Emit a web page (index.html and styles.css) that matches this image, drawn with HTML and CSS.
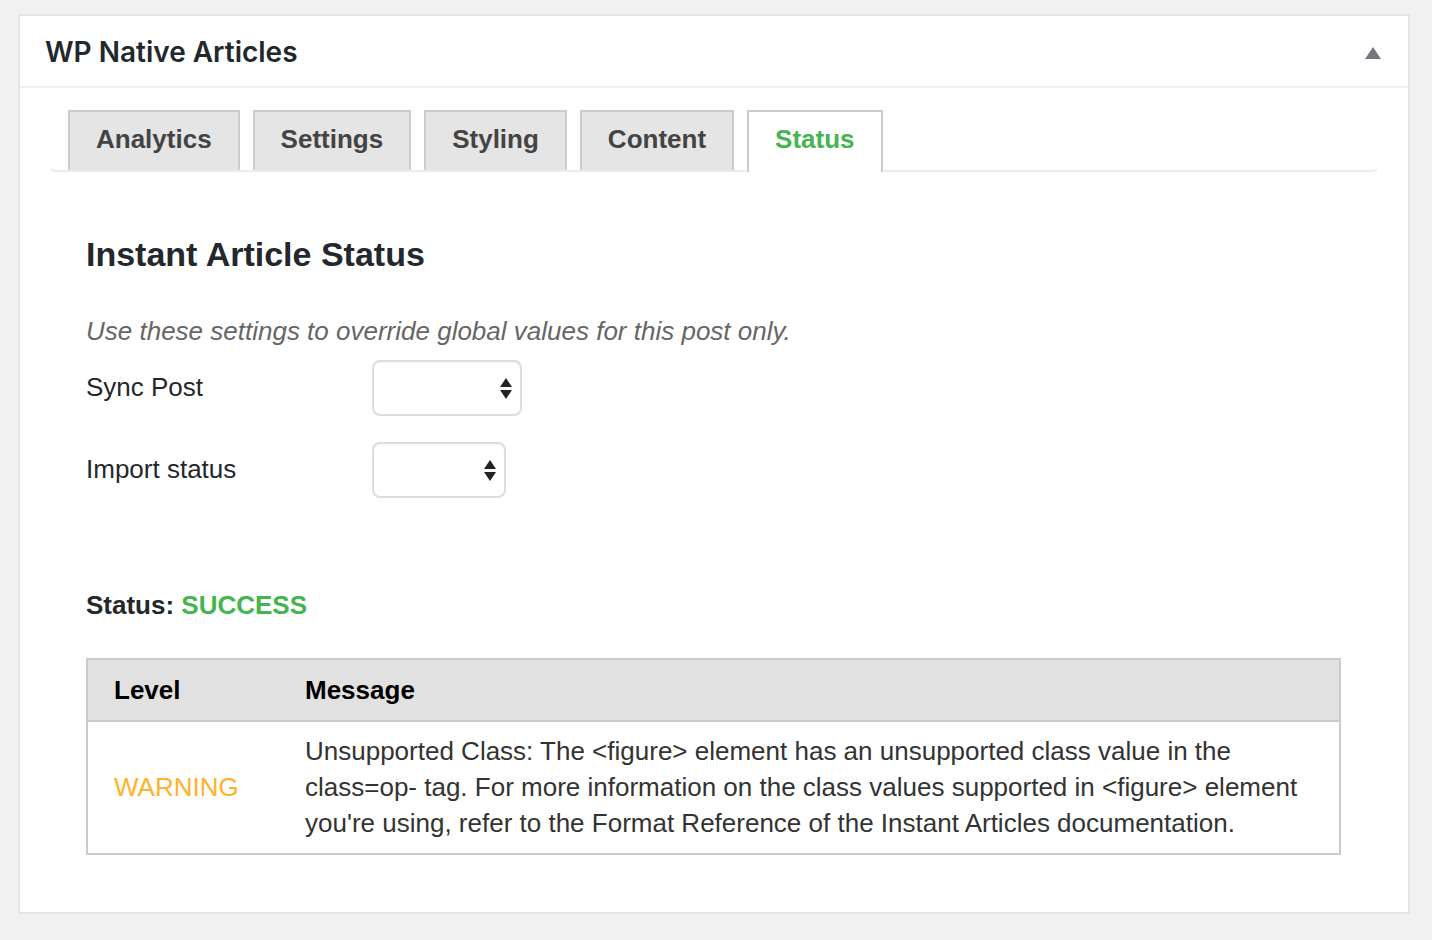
FILE: index.html
```html
<!DOCTYPE html>
<html lang="en">
<head>
<meta charset="utf-8">
<title>WP Native Articles</title>
<link rel="stylesheet" href="styles.css">
</head>
<body>
<div class="postbox">
  <div class="postbox-header">
    <h2 class="hndle">WP Native Articles</h2>
    <span class="toggle" aria-hidden="true"></span>
  </div>
  <div class="inside">
    <nav class="nav-tab-wrapper">
      <a class="nav-tab">Analytics</a>
      <a class="nav-tab">Settings</a>
      <a class="nav-tab">Styling</a>
      <a class="nav-tab">Content</a>
      <a class="nav-tab nav-tab-active">Status</a>
    </nav>
    <div class="panel">
      <h2 class="panel-title">Instant Article Status</h2>
      <p class="description">Use these settings to override global values for this post only.</p>
      <div class="form-row">
        <label class="form-label">Sync Post</label>
        <div class="select select-wide"><span class="arrows"><span class="up"></span><span class="down"></span></span></div>
      </div>
      <div class="form-row form-row-second">
        <label class="form-label">Import status</label>
        <div class="select select-narrow"><span class="arrows"><span class="up"></span><span class="down"></span></span></div>
      </div>
      <p class="status-line">Status: <span class="success">SUCCESS</span></p>
      <table class="messages">
        <colgroup>
          <col class="col-level-w">
          <col>
        </colgroup>
        <thead>
          <tr><th>Level</th><th>Message</th></tr>
        </thead>
        <tbody>
          <tr>
            <td class="warning">WARNING</td>
            <td>Unsupported Class: The &lt;figure&gt; element has an unsupported class value in the class=op- tag. For more information on the class values supported in &lt;figure&gt; element you're using, refer to the Format Reference of the Instant Articles documentation.</td>
          </tr>
        </tbody>
      </table>
    </div>
  </div>
</div>
</body>
</html>
```

FILE: styles.css
```css
html, body {
  margin: 0;
  padding: 0;
}
body {
  background: #f1f1f1;
  font-family: "Liberation Sans", Arial, sans-serif;
  color: #23282d;
  padding: 14px 22px 0 18px;
  height: 940px;
  box-sizing: border-box;
}
.postbox {
  background: #fff;
  border: 2px solid #e5e5e5;
  width: 1392px;
  box-sizing: border-box;
}
.postbox-header {
  height: 70px;
  border-bottom: 2px solid #eee;
  display: flex;
  align-items: center;
  justify-content: space-between;
  padding: 0 27px 0 25px;
}
.hndle {
  margin: 2px 0 0;
  font-family: Inter, "Liberation Sans", sans-serif;
  font-weight: 600;
  font-size: 28px;
  color: #23282d;
}
.toggle {
  width: 0;
  height: 0;
  border-left: 8px solid transparent;
  border-right: 8px solid transparent;
  border-bottom: 12px solid #72777c;
  margin-top: 4px;
}
.inside {
  padding: 22px 30px 57px 30px;
}
.nav-tab-wrapper {
  display: flex;
  padding-left: 18px;
  border-bottom: 2px solid #ececec;
  border-radius: 0 0 6px 6px;
  height: 60px;
}
.nav-tab {
  display: block;
  box-sizing: border-box;
  height: 60px;
  padding: 0 26px;
  margin-right: 13px;
  border: 2px solid #ccc;
  border-bottom: none;
  background: #e5e5e5;
  font-weight: 700;
  font-size: 26px;
  line-height: 54px;
  color: #444;
}
.nav-tab-active {
  background: #fff;
  color: #46b450;
  height: 62px;
}
.panel {
  padding: 0 36px;
}
.panel-title {
  margin: 62px 0 0;
  font-size: 34px;
  line-height: 41px;
  font-weight: 700;
  color: #23282d;
}
.description {
  margin: 38px 0 0;
  font-style: italic;
  font-size: 26px;
  line-height: 36px;
  color: #666;
}
.form-row {
  display: grid;
  grid-template-columns: 286px auto;
  align-items: center;
  margin-top: 11px;
}
.form-row-second {
  margin-top: 26px;
}
.form-label {
  font-size: 26px;
  line-height: 36px;
  color: #23282d;
  margin-top: -2px;
}
.select {
  height: 56px;
  box-sizing: border-box;
  border: 2px solid #ddd;
  border-radius: 8px;
  display: flex;
  align-items: center;
  justify-content: flex-end;
  padding-right: 8px;
  box-shadow: inset 0 1px 2px rgba(0,0,0,0.04);
}
.select-wide { width: 150px; }
.select-narrow { width: 134px; }
.arrows {
  display: flex;
  flex-direction: column;
  gap: 3px;
}
.arrows .up {
  width: 0; height: 0;
  border-left: 6px solid transparent;
  border-right: 6px solid transparent;
  border-bottom: 9px solid #222;
}
.arrows .down {
  width: 0; height: 0;
  border-left: 6px solid transparent;
  border-right: 6px solid transparent;
  border-top: 9px solid #222;
}
.status-line {
  margin: 89px 0 0;
  font-size: 26px;
  line-height: 36px;
  font-weight: 700;
  color: #23282d;
}
.success {
  color: #46b450;
}
.messages {
  margin-top: 35px;
  width: 1255px;
  border-collapse: collapse;
  border: 2px solid #ccc;
  table-layout: fixed;
}
.col-level-w {
  width: 192px;
}
.messages th {
  background: #e1e1e1;
  height: 60px;
  padding: 0 26px;
  text-align: left;
  font-size: 26px;
  font-weight: 700;
  color: #000;
  border-bottom: 2px solid #ccc;
}
.messages td {
  padding: 11px 26px 12px;
  font-size: 26px;
  line-height: 36px;
  color: #333;
  vertical-align: middle;
}
.messages .warning {
  color: #ffb22b;
}
```
